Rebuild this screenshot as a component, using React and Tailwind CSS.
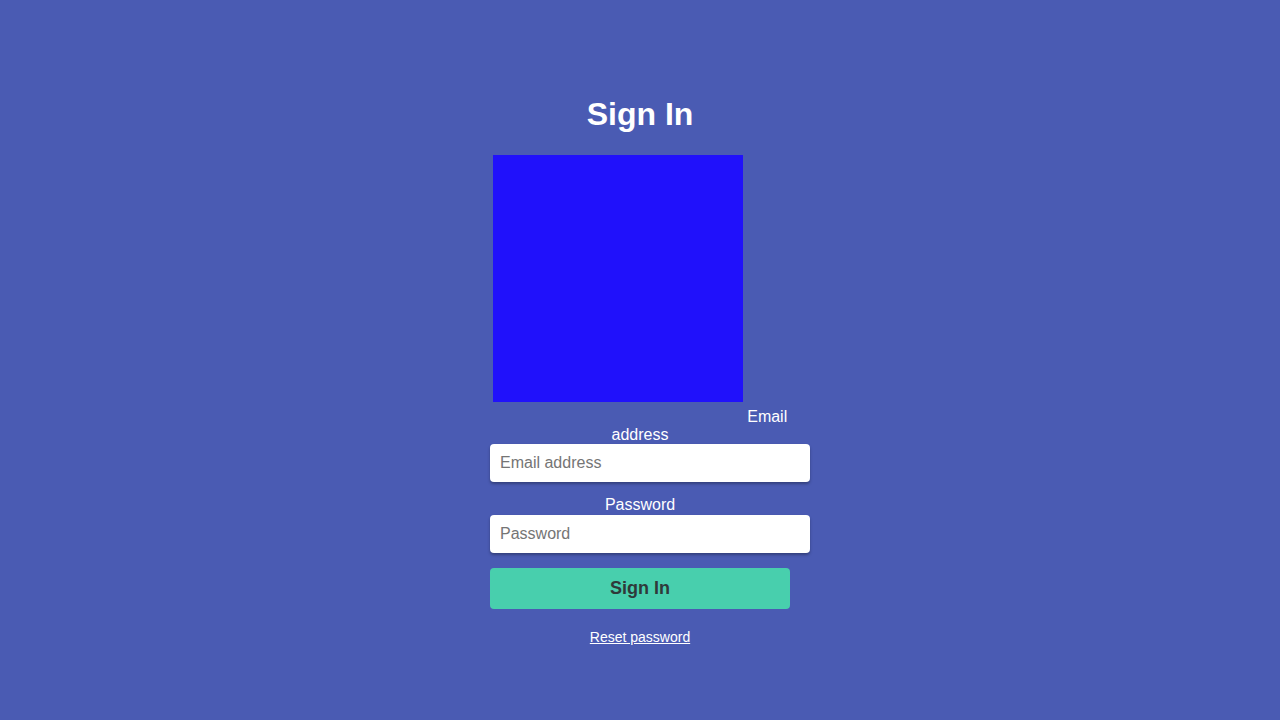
export default function App() {
  return (
    <div
      className="min-h-screen w-full bg-[#4a5bb3] flex justify-center"
      style={{ fontFamily: '"Liberation Sans", Arial, sans-serif' }}
    >
      <div className="w-[300px] pt-[96px] text-center text-white text-[16px]">
        <h1 className="text-[32px] font-bold leading-[37px] mb-[22px]">Sign In</h1>
        <form onSubmit={(e) => e.preventDefault()}>
          <label className="block leading-[18.4px]">
            <span className="inline-block align-baseline w-[250px] h-[247px] mb-[19.5px] bg-[#2011fb]"></span>{' '}
            Email address
          </label>
          <input
            type="email"
            placeholder="Email address"
            className="block w-[320px] h-[38px] px-[10px] rounded-[4px] bg-white text-[16px] text-[#333] placeholder-[#757575] shadow-[0_2px_3px_rgba(0,0,0,0.3)] outline-none"
          />
          <label className="block leading-[18.4px] mt-[14px]">Password</label>
          <input
            type="password"
            placeholder="Password"
            className="block w-[320px] h-[38px] px-[10px] rounded-[4px] bg-white text-[16px] text-[#333] placeholder-[#757575] shadow-[0_2px_3px_rgba(0,0,0,0.3)] outline-none"
          />
          <button
            type="submit"
            className="block w-[300px] h-[41px] mt-[15px] rounded-[4px] bg-[#48cfad] text-[#2f3a3a] text-[18px] font-bold"
          >
            Sign In
          </button>
        </form>
        <div className="mt-[16px]">
          <a href="#" className="text-[14px] text-white underline">Reset password</a>
        </div>
      </div>
    </div>
  );
}
